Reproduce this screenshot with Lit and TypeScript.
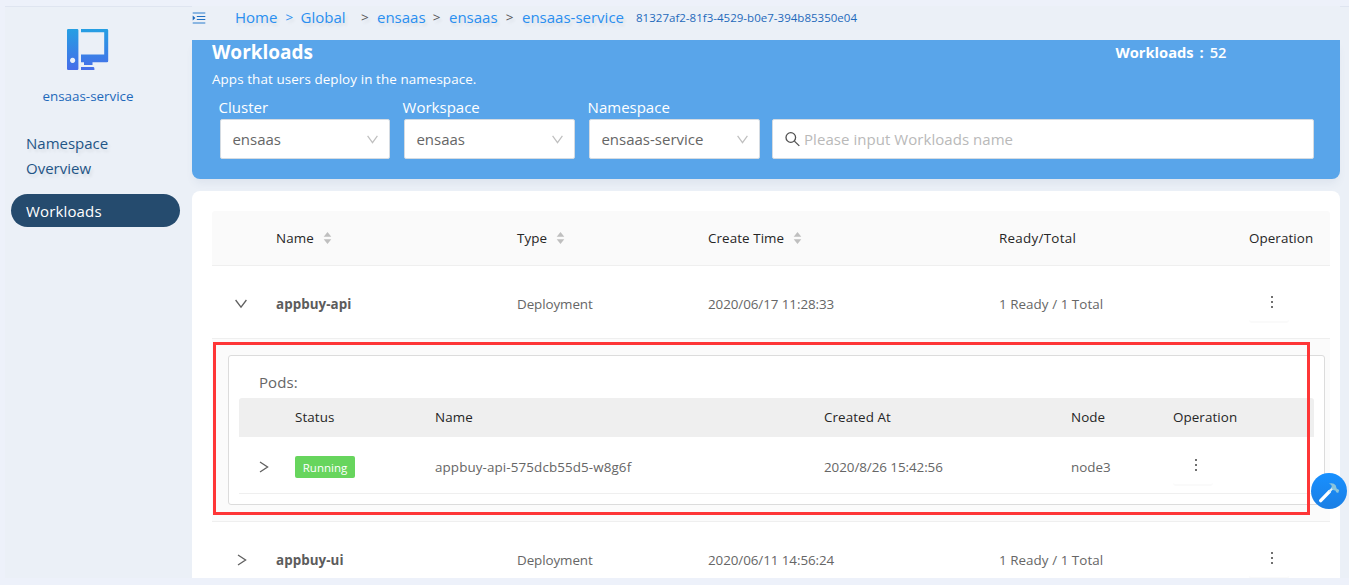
import { LitElement, html, svg, css } from "lit";
import { customElement } from "lit/decorators.js";

const base = css`
  :host { display: block; font-family: "Open Sans", "Noto Sans", "Noto Sans CJK SC", sans-serif; }
  * { box-sizing: border-box; }
  svg { display: block; }
`;

interface Workload { name: string; type: string; created: string; ready: string; open: boolean }

const workloads: Workload[] = [
  { name: "appbuy-api", type: "Deployment", created: "2020/06/17 11:28:33", ready: "1 Ready / 1 Total", open: true },
  { name: "appbuy-ui", type: "Deployment", created: "2020/06/11 14:56:24", ready: "1 Ready / 1 Total", open: false },
];

const chevronRight = svg`<path d="M1 1 L8.6 6 L1 11" fill="none" stroke="#606060" stroke-width="1.3"/>`;
const chevronDown = svg`<path d="M.6 1 L6 8.2 L11.4 1" fill="none" stroke="#606060" stroke-width="1.3"/>`;

const sorter = html`<svg width="9" height="12" viewBox="0 0 9 12"><path d="M4.5 0 L8.3 4.8 H.7Z M.7 7.2 H8.3 L4.5 12Z" fill="#bfbfbf"/></svg>`;

@customElement("side-nav")
export class SideNav extends LitElement {
  static styles = [base, css`
    :host { width: 187px; padding: 22px 12px 0 6px; border-top: 1px solid #dfe5f0; }
    .logo { margin-left: 56px; }
    .service { margin-top: 14px; height: 22px; line-height: 22px; width: 154px; text-align: center; font-size: 13.4px; font-weight: 500; color: #1e69bb; }
    .link { margin: 24px 0 0 15px; width: 100px; font-size: 15px; line-height: 25px; color: #1f5586; text-shadow: 2px 3px 3px rgba(0,0,0,.08); }
    .active { margin-top: 13px; height: 33px; border-radius: 17px; background: #254b6e; color: #fff; font-size: 15px; line-height: 34px; padding-left: 15px; letter-spacing: .15px; }
  `];
  render() {
    return html`
      <svg class="logo" width="42" height="42" viewBox="0 0 42 42">
        <defs><linearGradient id="g" x1="0" y1="0" x2="0" y2="42" gradientUnits="userSpaceOnUse"><stop offset="0" stop-color="#259fe3"/><stop offset="1" stop-color="#476ce9"/></linearGradient></defs>
        <path fill="url(#g)" fill-rule="evenodd" d="M1.2 0H10.2a1.2 1.2 0 0 1 1.2 1.2V39.8a1.2 1.2 0 0 1-1.2 1.2H1.2A1.2 1.2 0 0 1 0 39.8V1.2A1.2 1.2 0 0 1 1.2 0Z M5.6 28.8a2.6 2.6 0 1 0 .01 0Z M14 0H40a1.2 1.2 0 0 1 1.2 1.2V32a1.2 1.2 0 0 1-1.2 1.2H25.5V36H17V33.2H14V25.4H37.2V3.2H14Z M14 38H26a1.4 1.4 0 0 1 1.4 1.4V41H14Z"/>
      </svg>
      <div class="service">ensaas-service</div>
      <div class="link">Namespace Overview</div>
      <div class="active">Workloads</div>`;
  }
}

@customElement("crumb-bar")
export class CrumbBar extends LitElement {
  static styles = [base, css`
    :host { display: flex; height: 34px; align-items: center; padding-bottom: 10px; font-size: 15px; line-height: 20px; color: #2a8ff0; white-space: nowrap; }
    .crumbs { margin-left: 29px; display: grid; grid-template-columns: 43px 22.5px 45px 31.5px 47px 25px 48px 25px 114px auto; text-shadow: 2px 3px 3px rgba(0,0,0,.08); }
    .sep { text-align: center; font-size: 13.5px; color: #555; }
    .sep.first { color: #2a8ff0; }
    .sep.wide { padding-left: 7px; }
    .id { font-size: 11.5px; color: #1e69bb; line-height: 22px; text-shadow: none; letter-spacing: .02px; }
  `];
  render() {
    return html`
      <svg width="14" height="12" viewBox="0 0 14 12">
        <path d="M.7 1H13.3M.7 11H13.3" stroke="#6ba3dc" stroke-width="1.6"/>
        <path d="M4.8 4.5H13.3M4.8 7.5H13.3" stroke="#1e6fc2" stroke-width="1.2"/>
        <path d="M.7 3.6V8.4L3.4 6Z" fill="#1e69bb"/>
      </svg>
      <div class="crumbs">
        <span>Home</span><span class="sep first">&gt;</span><span>Global</span><span class="sep wide">&gt;</span>
        <span>ensaas</span><span class="sep">&gt;</span><span>ensaas</span><span class="sep">&gt;</span>
        <span>ensaas-service</span><span class="id">81327af2-81f3-4529-b0e7-394b85350e04</span>
      </div>`;
  }
}

@customElement("filter-panel")
export class FilterPanel extends LitElement {
  static styles = [base, css`
    :host { height: 139px; padding: 0 26px 0 20px; background: #59a5ea; border-radius: 0 0 8px 8px; box-shadow: 0 6px 8px -2px rgba(60,90,130,.08); color: #fff; }
    .top { display: flex; justify-content: space-between; padding-right: 86px; height: 26px; }
    .title { font-size: 19px; font-weight: 700; line-height: 24px; }
    .count { font-size: 14.7px; font-weight: 700; line-height: 25px; width: 112.5px; display: flex; }
    .colon { width: 16px; text-align: center; }
    .total { font-weight: 600; }
    .desc { font-size: 13.4px; line-height: 26px; letter-spacing: .1px; }
    .filters { display: grid; grid-template-columns: 170px 171px 171px 542px; column-gap: 14px; margin: 4px 0 0 8px; }
    .label { height: 23px; margin-left: -1.4px; font-size: 15px; line-height: 22px; }
    .box { height: 40px; background: #fff; border: 1px solid #d4dbe2; border-radius: 2px; color: #666; font-size: 15px; display: flex; align-items: center; justify-content: space-between; padding: 0 11px 0 11.4px; }
    .search { margin: 23px 0 0 -2px; width: 542px; justify-content: flex-start; gap: 4px; padding-left: 12px; color: #b9b9b9; letter-spacing: .05px; }
  `];
  select(label: string, value: string) {
    return html`<div><div class="label">${label}</div><div class="box"><span>${value}</span>
      <svg width="11" height="9" viewBox="0 0 11 9"><path d="M.6 .8L5.5 7.6L10.4 .8" fill="none" stroke="#bfbfbf" stroke-width="1.2"/></svg></div></div>`;
  }
  render() {
    return html`
      <div class="top"><div class="title">Workloads</div><div class="count"><span>Workloads</span><span class="colon">:</span><span class="total">52</span></div></div>
      <div class="desc">Apps that users deploy in the namespace.</div>
      <div class="filters">
        ${this.select("Cluster", "ensaas")}${this.select("Workspace", "ensaas")}${this.select("Namespace", "ensaas-service")}
        <div class="box search"><svg width="15" height="15" viewBox="0 0 15 15"><g fill="none" stroke="#505050" stroke-width="1.3"><circle cx="5.8" cy="5.5" r="4.8"/><path d="M9.4 9.1L14.3 13.9"/></g></svg><span>Please input Workloads name</span></div>
      </div>`;
  }
}

@customElement("more-button")
export class MoreButton extends LitElement {
  static styles = [base, css`
    :host { width: 40px; height: 41px; padding: 14px 0 0 22px; border-radius: 3px; border-bottom: 2px solid #fafafa; }
  `];
  render() {
    return html`<svg width="2" height="12" viewBox="0 0 2 12"><path d="M0 0H2V2H0ZM0 5H2V7H0ZM0 10H2V12H0Z" fill="#707070"/></svg>`;
  }
}

@customElement("pod-table")
export class PodTable extends LitElement {
  static styles = [base, css`
    :host { margin: 16px 5px 16px 16px; height: 150px; padding: 15px 10px 10px; background: #fff; border: 1px solid #dcdcdc; border-radius: 3px; color: #666; font-size: 13.4px; }
    .caption { font-size: 15px; line-height: 22px; height: 27px; padding-left: 20px; letter-spacing: .1px; }
    .row { display: grid; grid-template-columns: 56px 140px 389px 247px 102px 1fr; align-items: center; }
    .head { height: 39px; padding-bottom: 2px; background: #efefef; border-radius: 3px 3px 0 0; color: #262626; letter-spacing: .08px; font-weight: 500; }
    .body { height: 57px; border-bottom: 1px solid #efefef; padding-top: 3px; }
    .arrow { margin-left: 19.5px; }
    .pod { letter-spacing: .11px; }
    .date { letter-spacing: -.06px; }
    .tag { display: inline-block; width: 60px; height: 22px; background: #67d55d; border-radius: 2px; color: #fff; font-size: 11.5px; line-height: 23px; text-align: center; }
    more-button { display: block; margin-top: -3px; }
  `];
  render() {
    return html`
      <div class="caption">Pods:</div>
      <div class="row head"><span></span><span>Status</span><span>Name</span><span>Created At</span><span>Node</span><span>Operation</span></div>
      <div class="row body"><svg class="arrow" width="10" height="12" viewBox="0 0 10 12">${chevronRight}</svg><span><span class="tag">Running</span></span><span class="pod">appbuy-api-575dcb55d5-w8g6f</span><span class="date">2020/8/26 15:42:56</span><span>node3</span><more-button></more-button></div>`;
  }
}

@customElement("workload-table")
export class WorkloadTable extends LitElement {
  static styles = [base, css`
    :host { flex: 1; min-height: 0; overflow: hidden; margin-top: 12px; padding: 20px 10px 0 20px; background: #fff; border-radius: 8px 8px 0 0; font-size: 13.4px; color: #666; }
    .row { display: grid; grid-template-columns: 64px 241px 191px 291px 250px 1fr; align-items: center; border-bottom: 1px solid #efefef; }
    .head { height: 55px; background: #fafafa; border-radius: 3px 3px 0 0; color: #262626; letter-spacing: .08px; font-weight: 500; }
    .head span { display: flex; align-items: center; gap: 9px; }
    .head .ready { letter-spacing: .28px; }
    .body { height: 73px; padding-top: 3px; }
    .name { font-weight: 700; color: #5c5c5c; letter-spacing: .05px; }
    .type { letter-spacing: -.08px; }
    .date { letter-spacing: -.07px; }
    .total { letter-spacing: .05px; }
    .arrow { margin: 0 0 0 23px; }
    .arrow.right { margin-left: 24.5px; }
    .expanded { height: 183px; padding-top: .1px; background: #fbfbfb; border-bottom: 1px solid #efefef; }
    more-button, pod-table { display: block; }
    more-button { margin-top: -3px; }
  `];
  row(w: Workload) {
    return html`<div class="row body">
      ${w.open ? html`<svg class="arrow" width="12" height="10" viewBox="0 0 12 10">${chevronDown}</svg>` : html`<svg class="arrow right" width="10" height="12" viewBox="0 0 10 12">${chevronRight}</svg>`}
      <span class="name">${w.name}</span><span class="type">${w.type}</span><span class="date">${w.created}</span><span class="total">${w.ready}</span><more-button></more-button></div>
      ${w.open ? html`<div class="expanded"><pod-table></pod-table></div>` : ""}`;
  }
  render() {
    return html`<div class="row head"><span></span><span>Name ${sorter}</span><span>Type ${sorter}</span><span>Create Time ${sorter}</span><span class="ready">Ready/Total</span><span>Operation</span></div>
      ${workloads.map((w) => this.row(w))}`;
  }
}

@customElement("app-root")
export class AppRoot extends LitElement {
  static styles = [base, css`
    :host { height: 585px; position: relative; overflow: hidden; background: #edf1fa; padding: 6px 0 7px 5px; }
    .shell { display: flex; height: 572px; background: #ebf0f7; }
    side-nav { display: block; flex: none; }
    .main { width: 1148px; display: flex; flex-direction: column; }
    filter-panel, workload-table { display: block; }
    .gutter { flex: 1; border-top: 1px solid #dfe5f0; }
    .highlight { position: absolute; left: 213px; top: 342px; width: 1097px; height: 173px; border: 3px solid #fe3637; }
    .tool { position: absolute; left: 1311px; top: 473px; }
  `];
  render() {
    return html`
      <div class="shell">
        <side-nav></side-nav>
        <div class="main"><crumb-bar></crumb-bar><filter-panel></filter-panel><workload-table></workload-table></div>
        <div class="gutter"></div>
      </div>
      <div class="highlight"></div>
      <svg class="tool" width="36" height="36" viewBox="0 0 36 36">
        <defs><linearGradient id="t" x1="0" y1="0" x2="0" y2="1"><stop offset="0" stop-color="#1890ff"/><stop offset="1" stop-color="#1b7fe4"/></linearGradient></defs>
        <circle cx="18" cy="18" r="18" fill="url(#t)"/>
        <path d="M9.7 27.6L18.4 18.6" stroke="#fff" stroke-width="3.4" stroke-linecap="round"/>
        <path d="M18 19L22 14.8" stroke="#dff0f5" stroke-width="2.2"/>
        <path d="M18 10.6Q22.6 9.4 24.8 12.6L25.6 15.6L28.2 17L27.2 20L25.2 19.2L24.4 17.4L22.6 17.2L20.2 15Q22 12.6 18 10.6Z" fill="#8ac4dc"/>
      </svg>`;
  }
}
